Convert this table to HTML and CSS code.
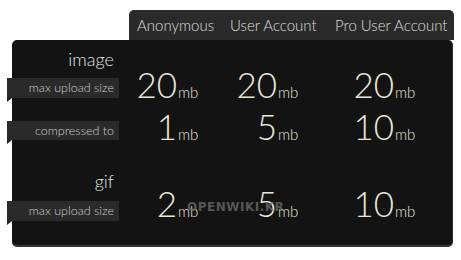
FILE: index.html
```html
<!DOCTYPE html>
<html>
<head>
<meta charset="utf-8">
<link rel="stylesheet" href="styles.css">
</head>
<body>
<div class="page">
  <div class="tabs">
    <span>Anonymous</span>
    <span>User Account</span>
    <span>Pro User Account</span>
  </div>
  <div class="card">
    <div class="heading">image</div>
    <div class="row row1">
      <div class="label">max upload size</div>
      <span class="num">20</span><span class="unit">mb</span>
      <span class="num">20</span><span class="unit">mb</span>
      <span class="num">20</span><span class="unit">mb</span>
    </div>
    <div class="row row2">
      <div class="label">compressed to</div>
      <span class="num">1</span><span class="unit">mb</span>
      <span class="num">5</span><span class="unit">mb</span>
      <span class="num">10</span><span class="unit">mb</span>
    </div>
    <div class="heading heading-gif">gif</div>
    <div class="row row3">
      <div class="label">max upload size</div>
      <span class="num">2</span><span class="unit">mb</span>
      <span class="num">5</span><span class="unit">mb</span>
      <span class="num">10</span><span class="unit">mb</span>
    </div>
    <div class="watermark">OPENWIKI.KR</div>
  </div>
</div>
</body>
</html>
```
FILE: styles.css
```css
html, body {
  margin: 0;
  padding: 0;
  background: #ffffff;
}
body {
  font-family: Lato, "Open Sans", sans-serif;
  width: 461px;
  height: 260px;
  overflow: hidden;
}
.page {
  padding-top: 10px;
}
.tabs {
  margin-left: 129px;
  width: 325px;
  height: 30px;
  box-sizing: border-box;
  background: #2a2a2a;
  border-radius: 5px 5px 0 0;
  display: grid;
  grid-template-columns: 93px 105px 1fr;
  padding-left: 8px;
  align-items: center;
  color: #dedede;
  font-size: 15px;
  font-weight: 300;
}
.card {
  position: relative;
  margin-left: 12px;
  width: 441px;
  height: 207px;
  box-sizing: border-box;
  background: #131313;
  border-radius: 5px;
  border-bottom: 2px solid #353535;
  border-right: 1px solid #2c2c2c;
}
.heading {
  width: 102px;
  text-align: right;
  font-size: 18px;
  line-height: 17px;
  padding-top: 11px;
  color: #e2e2e2;
  font-weight: 300;
}
.heading-gif {
  padding-top: 33px;
}
.row {
  display: grid;
  grid-template-columns: 110px 55px 45px 55px 55px 62px 1fr;
  align-items: end;
}
.row1 { height: 30px; }
.row2 { height: 42px; }
.row3 { height: 27px; }
.label {
  position: relative;
  margin-left: -5px;
  width: 112px;
  height: 20px;
  box-sizing: border-box;
  padding-right: 5px;
  background: #2a2a2a;
  color: #cfcfcf;
  font-size: 12.5px;
  font-weight: 300;
  line-height: 20px;
  text-align: right;
}
.row2 .label { height: 19px; line-height: 19px; }
.label::after {
  content: "";
  position: absolute;
  left: 0;
  top: 100%;
  border-top: 4px solid #222222;
  border-left: 5px solid transparent;
  transform: scaleX(-1);
}
.num {
  text-align: right;
  font-size: 35px;
  line-height: 27px;
  color: #e9e7dc;
  font-weight: 300;
}
.unit {
  padding-left: 1px;
  font-size: 15px;
  font-weight: 300;
  line-height: 12px;
  color: #e9e7dc;
}
.row3 .num, .row3 .unit {
  margin-bottom: 4px;
}
.watermark {
  position: absolute;
  left: 175px;
  top: 160px;
  font-family: "DejaVu Sans", sans-serif;
  font-weight: bold;
  font-size: 12px;
  letter-spacing: 0.5px;
  color: rgba(110, 110, 110, 0.75);
}
```
